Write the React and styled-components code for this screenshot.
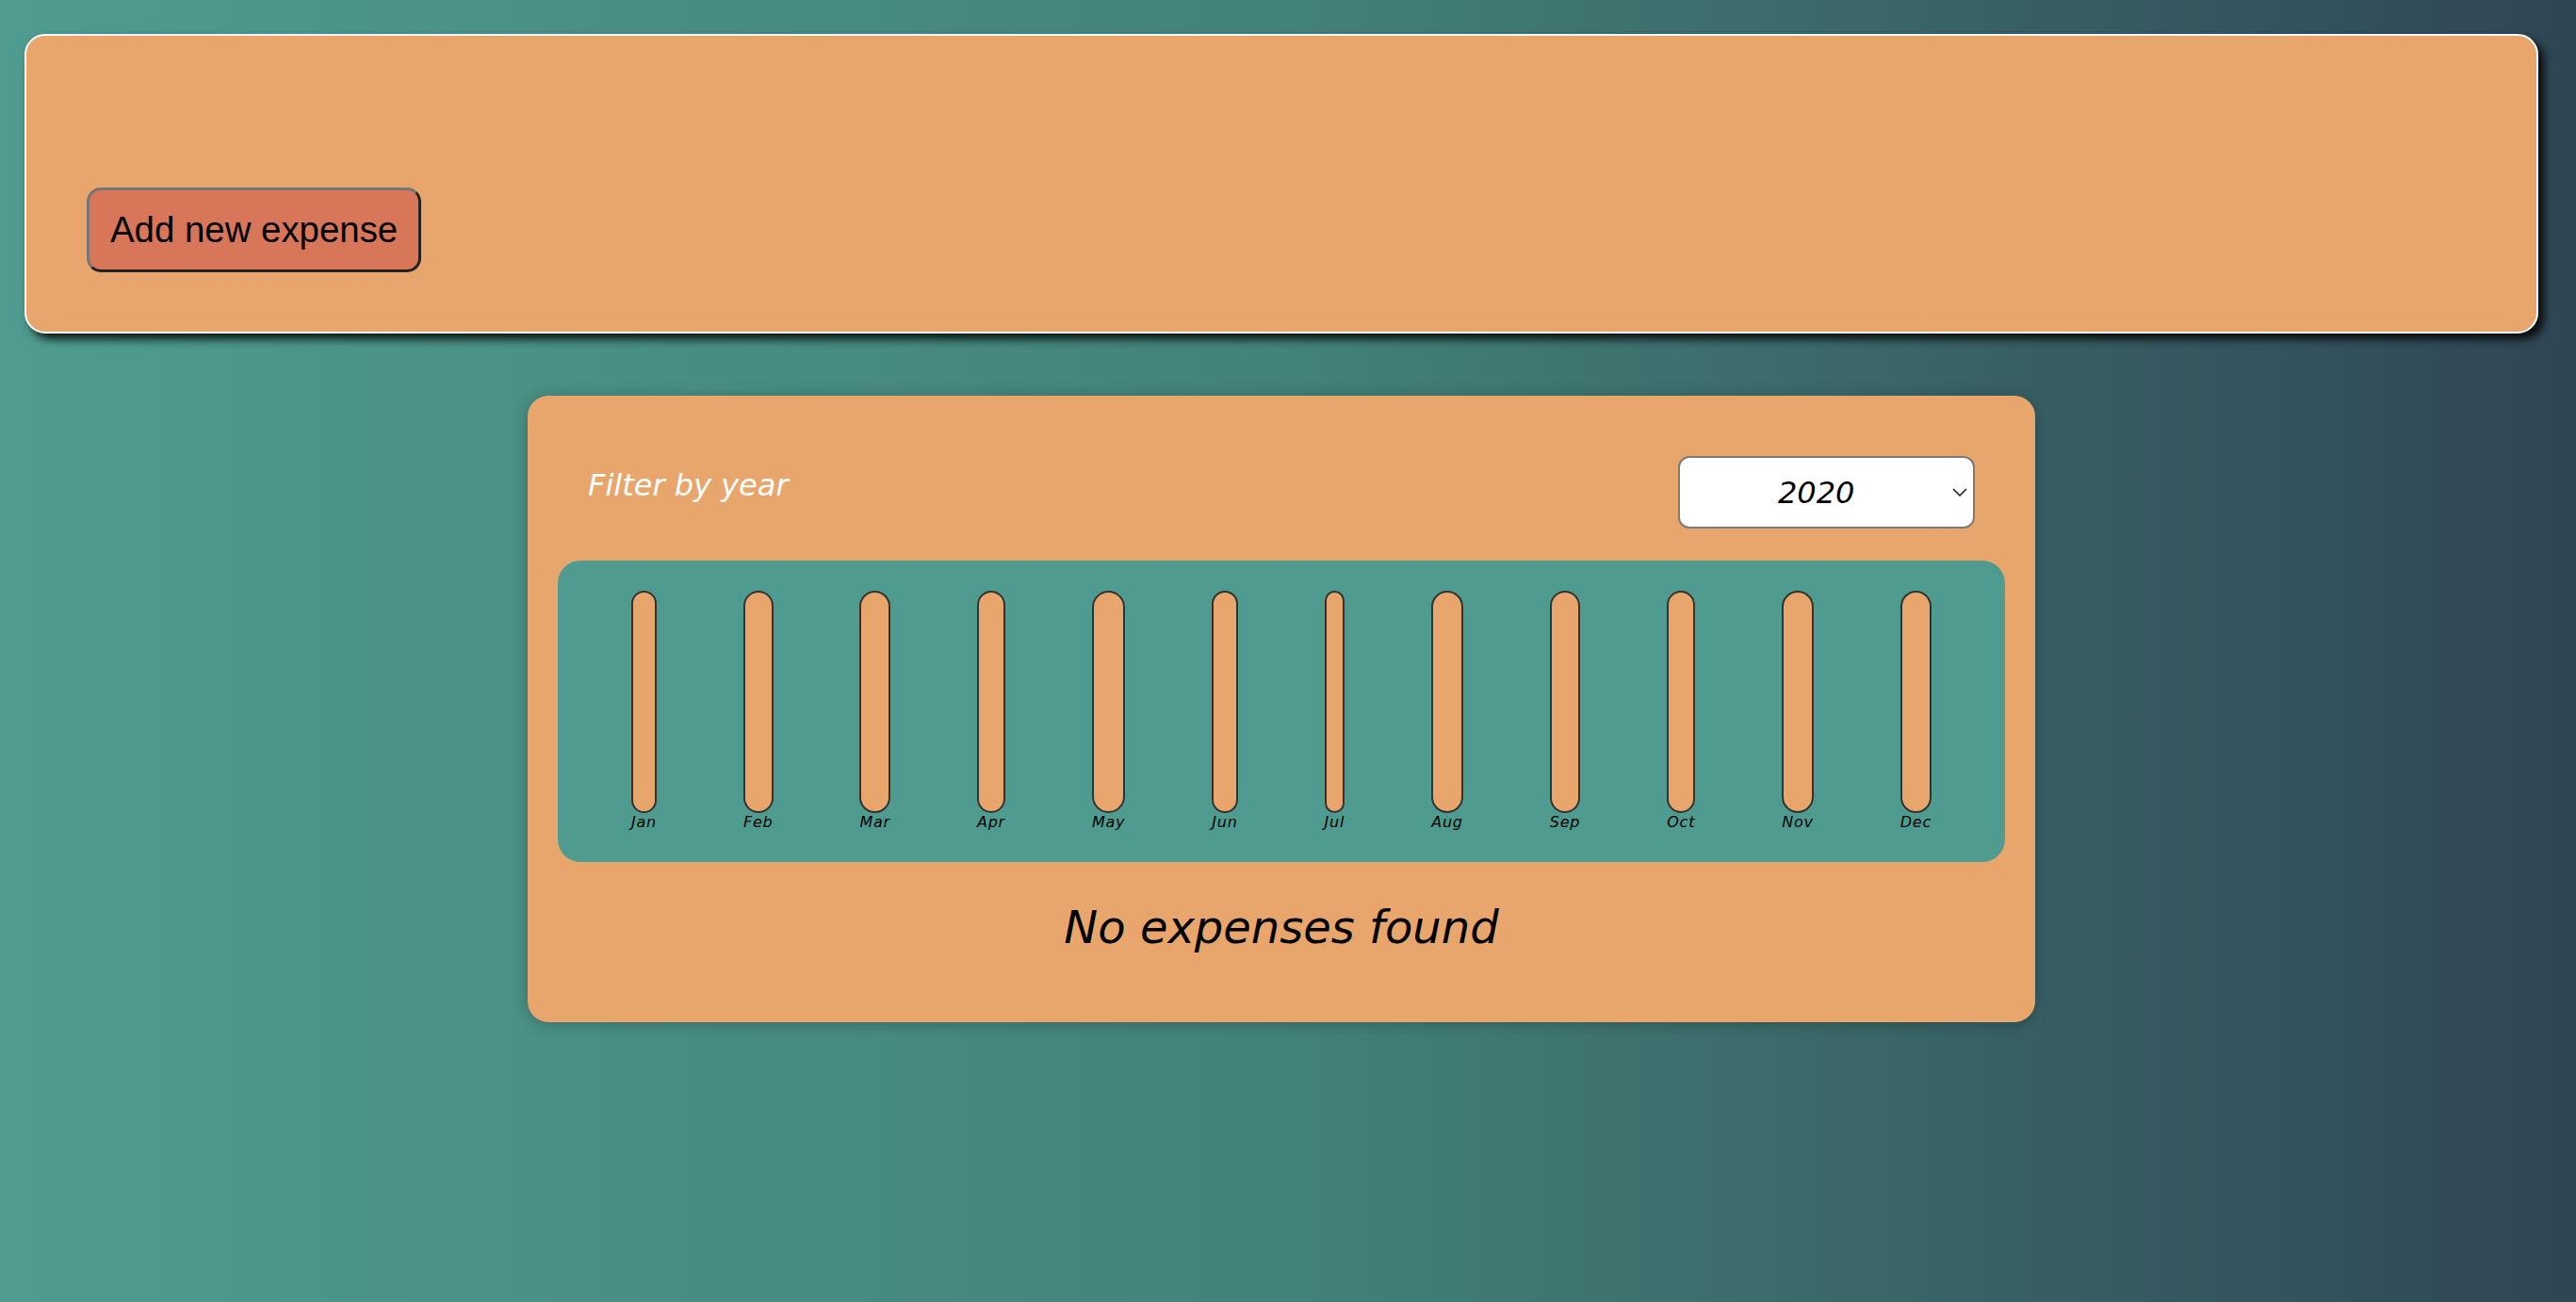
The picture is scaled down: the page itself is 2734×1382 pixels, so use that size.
import React from 'react'
import styled, { createGlobalStyle } from 'styled-components'

const months = ['Jan', 'Feb', 'Mar', 'Apr', 'May', 'Jun', 'Jul', 'Aug', 'Sep', 'Oct', 'Nov', 'Dec']

const GlobalStyle = createGlobalStyle`
    * {
        box-sizing: border-box;
    }
    html, body {
        margin: 0;
        padding: 0;
    }
    body {
        min-height: 100vh;
        font-family: "DejaVu Sans", "Noto Sans", sans-serif;
        background: linear-gradient(90deg, #4f9b8f 0%, #438279 50%, #2f4654 100%);
    }
`

function App() {
    return (
        <>
            <GlobalStyle />
            <Page>
                <NewExpense>
                    <AddButton type="button">Add new expense</AddButton>
                </NewExpense>
                <Expenses>
                    <FilterRow>
                        <FilterLabel>Filter by year</FilterLabel>
                        <SelectWrap>
                            <YearSelect defaultValue="2020">
                                <option value="2022">2022</option>
                                <option value="2021">2021</option>
                                <option value="2020">2020</option>
                                <option value="2019">2019</option>
                            </YearSelect>
                            <Chevron width="16" height="9" viewBox="0 0 16 9">
                                <path d="M1 1 L8 8 L15 1" fill="none" stroke="#222" strokeWidth="1.6" />
                            </Chevron>
                        </SelectWrap>
                    </FilterRow>
                    <Chart>
                        {months.map((m) => (
                            <BarColumn key={m}>
                                <BarInner />
                                <BarLabel>{m}</BarLabel>
                            </BarColumn>
                        ))}
                    </Chart>
                    <Fallback>No expenses found</Fallback>
                </Expenses>
            </Page>
        </>
    )
}

export default App

const Page = styled.div`
    padding: 36px 40px 40px 26px;
`
const NewExpense = styled.div`
    background: #e8a66d;
    border: 2px solid #ffffff;
    border-radius: 22px;
    // hard dark shadow to the bottom right
    box-shadow: 6px 6px 10px rgba(0, 0, 0, 0.85);
    padding: 161px 64px 63px 64px;
    display: flex;
    align-items: center;
`
const AddButton = styled.button`
    font-family: "Liberation Sans", Arial, sans-serif;
    font-size: 38.4px;
    line-height: 44px;
    color: #000;
    background: #d8765a;
    border: 3px solid;
    border-color: #767676 #222 #222 #767676;
    border-radius: 15px;
    padding: 20px 22px;
    cursor: pointer;
`
const Expenses = styled.div`
    width: 1600px;
    margin: 66px auto 0;
    padding: 32px;
    background: #e8a66d;
    border-radius: 22px;
    box-shadow: 0 2px 16px rgba(0, 0, 0, 0.25);
`
const FilterRow = styled.div`
    display: flex;
    align-items: center;
    justify-content: space-between;
    padding: 0 32px;
    margin: 32px 0 34px;
`
const FilterLabel = styled.label`
    color: #ffffff;
    font-style: italic;
    font-size: 32px;
    margin-bottom: 16px;
`
const SelectWrap = styled.div`
    position: relative;
    display: flex;
`
const YearSelect = styled.select`
    appearance: none;
    -webkit-appearance: none;
    width: 315px;
    height: 77px;
    padding: 0 0 0 104px;
    font-family: "DejaVu Sans", sans-serif;
    font-style: italic;
    font-size: 32px;
    color: #000;
    background: #ffffff;
    border: 2px solid #7a7a7a;
    border-radius: 12px;
`
const Chevron = styled.svg`
    position: absolute;
    right: 8px;
    top: 34px;
    pointer-events: none;
`
const Chart = styled.div`
    height: 320px;
    padding: 32px;
    border-radius: 24px;
    background: #509b8f;
    display: flex;
    justify-content: space-around;
`
const BarColumn = styled.div`
    height: 100%;
    display: flex;
    flex-direction: column;
    align-items: center;
`
const BarInner = styled.div`
    flex: 1;
    width: 100%;
    background: #e8a66d;
    border: 2px solid #333333;
    border-radius: 24px;
`
const BarLabel = styled.div`
    font-style: italic;
    font-size: 16px;
    line-height: 20px;
    letter-spacing: 0.8px;
    color: #000;
    text-align: center;
`
const Fallback = styled.h2`
    margin: 40px 0 40px;
    text-align: center;
    font-style: italic;
    font-weight: 400;
    font-size: 48px;
    line-height: 58px;
    color: #000;
`
